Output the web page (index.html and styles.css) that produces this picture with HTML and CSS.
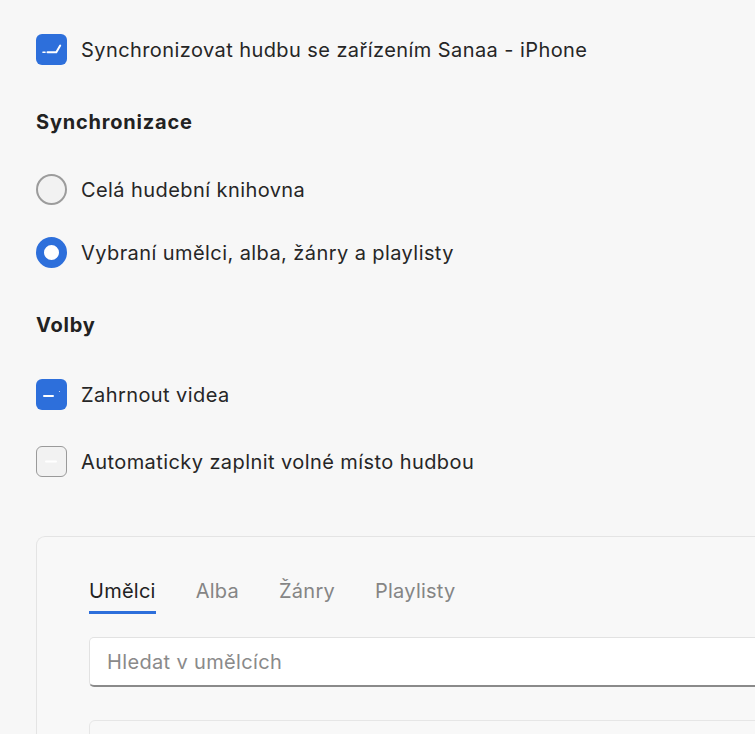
FILE: index.html
```html
<!DOCTYPE html>
<html lang="cs">
<head>
<meta charset="utf-8">
<title>Synchronizace hudby</title>
<link rel="stylesheet" href="styles.css">
</head>
<body>
<div class="page">
  <label class="row row-main">
    <span class="box box-on">
      <svg viewBox="0 0 31 31" width="31" height="31"><path d="M7 18.3h2" stroke="#fff" stroke-width="1.6" stroke-linecap="round" fill="none"/><path d="M11.5 18.3h8.8l3.9-6.8" stroke="#fff" stroke-width="2" stroke-linecap="round" stroke-linejoin="round" fill="none"/></svg>
    </span>
    <span class="label">Synchronizovat hudbu se zařízením Sanaa - iPhone</span>
  </label>

  <h2 class="heading h-sync">Synchronizace</h2>

  <label class="row r-radio1">
    <span class="radio"></span>
    <span class="label">Celá hudební knihovna</span>
  </label>
  <label class="row r-radio2">
    <span class="radio radio-on"></span>
    <span class="label">Vybraní umělci, alba, žánry a playlisty</span>
  </label>

  <h2 class="heading h-opt">Volby</h2>

  <label class="row r-check1">
    <span class="box box-on">
      <svg viewBox="0 0 31 31" width="31" height="31"><path d="M8 17h9" stroke="#fff" stroke-width="2" stroke-linecap="round" fill="none"/><circle cx="23.5" cy="12.5" r="0.6" fill="#fff" opacity="0.8"/></svg>
    </span>
    <span class="label">Zahrnout videa</span>
  </label>
  <label class="row r-check2">
    <span class="box box-off">
      <svg viewBox="0 0 31 31" width="31" height="31"><path d="M10 15.5h10" stroke="#fff" stroke-width="2" stroke-linecap="round" fill="none"/></svg>
    </span>
    <span class="label">Automaticky zaplnit volné místo hudbou</span>
  </label>

  <section class="panel">
    <nav class="tabs">
      <span class="tab tab-active">Umělci</span>
      <span class="tab">Alba</span>
      <span class="tab">Žánry</span>
      <span class="tab">Playlisty</span>
    </nav>
    <div class="search">Hledat v umělcích</div>
    <div class="list"></div>
  </section>
</div>
</body>
</html>
```

FILE: styles.css
```css
html, body {
  margin: 0;
  padding: 0;
  background: #f7f7f7;
  overflow: hidden;
}
body {
  width: 755px;
  height: 734px;
  font-family: Inter, "Liberation Sans", Arial, sans-serif;
  color: #262626;
}
.page {
  padding: 34px 0 0 36px;
  display: flex;
  flex-direction: column;
  align-items: flex-start;
}
.row {
  display: flex;
  align-items: center;
  gap: 14px;
  height: 31px;
  font-size: 20px;
}
.label {
  line-height: 24px;
  letter-spacing: 0.42px;
}
.box {
  width: 31px;
  height: 31px;
  box-sizing: border-box;
  border-radius: 6px;
  display: block;
  flex: none;
}
.box svg { display: block; }
.box-on {
  background: #2d6fdb;
}
.box-off {
  background: #f2f2f2;
  border: 1.5px solid #9a9a9a;
}
.box-off svg { margin: -1.5px; }
.radio {
  width: 31px;
  height: 31px;
  box-sizing: border-box;
  border-radius: 50%;
  border: 2px solid #9c9c9c;
  background: #f2f2f2;
  flex: none;
}
.radio-on {
  border: 8px solid #2d6fdb;
  background: #fff;
}
.heading {
  margin: 0;
  font-size: 20px;
  font-weight: 700;
  line-height: 24px;
  letter-spacing: 0.8px;
  color: #222;
}
.h-sync { margin-top: 45px; }
.r-radio1 { margin-top: 40px; }
.r-radio2 { margin-top: 32px; }
.h-opt { margin-top: 45px; }
.r-check1 { margin-top: 42px; }
.r-check2 { margin-top: 36px; }

.panel {
  margin-top: 59px;
  width: 800px;
  box-sizing: border-box;
  border: 1px solid #e4e4e4;
  border-right: none;
  border-bottom: none;
  border-radius: 9px 0 0 0;
  background: #f8f8f8;
  padding: 42px 0 0 52px;
  height: 198px;
  overflow: hidden;
}
.tabs {
  display: flex;
  gap: 40px;
  font-size: 20px;
  letter-spacing: 0.25px;
}
.tab {
  color: #858585;
  line-height: 24px;
  padding-bottom: 8px;
  border-bottom: 3px solid transparent;
}
.tab-active {
  color: #222;
  border-bottom-color: #2d6fdb;
}
.search {
  margin-top: 23px;
  height: 50px;
  box-sizing: border-box;
  background: #fff;
  border: 1px solid #e2e2e2;
  border-bottom: 2px solid #8a8a8a;
  border-radius: 5px 0 0 5px;
  padding: 0 17px;
  display: flex;
  align-items: center;
  font-size: 20px;
  letter-spacing: 0.35px;
  color: #8a8a8a;
}
.list {
  margin-top: 33px;
  height: 40px;
  border: 1px solid #e6e6e6;
  border-radius: 6px 0 0 0;
  background: #f8f8f8;
}
```
